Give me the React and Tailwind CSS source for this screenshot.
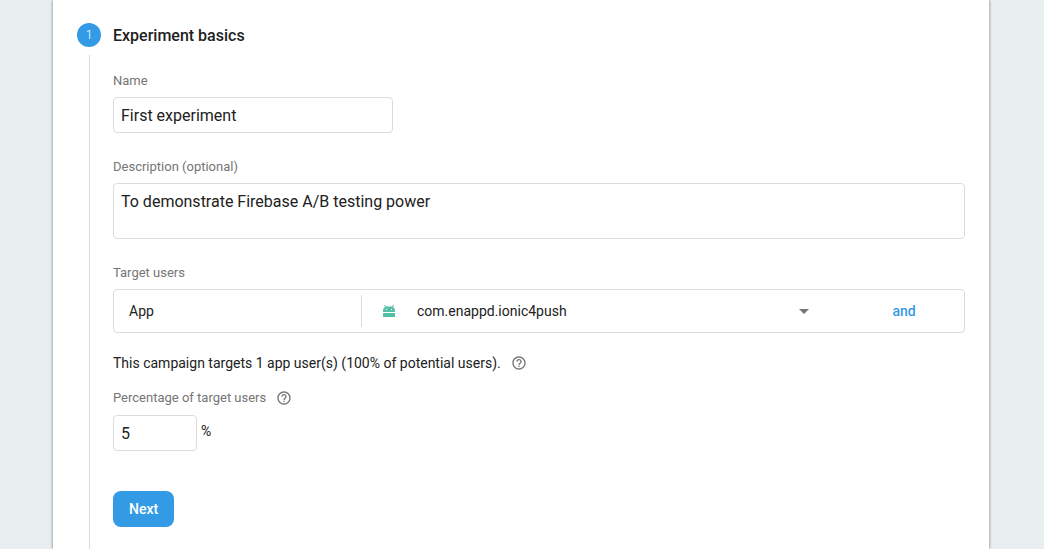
import React, { useState } from 'react'
import { MdHelpOutline, MdArrowDropDown } from 'react-icons/md'

const APPS = ['com.enappd.ionic4push']

const LABEL = 'flex items-center gap-2.5 text-[13px] leading-[18px] text-[#757575]'
const FIELD = 'block border border-[#dcdcdc] rounded bg-white px-[7px] text-base text-[#212121] outline-none focus:border-[#339be6]'
const GROUP = 'mt-[25px] flex flex-col gap-[7px]'

// Android head shown next to the selected app
function AndroidIcon() {
  return (
    <svg viewBox="0 0 12 12" className="w-3 h-3 shrink-0 overflow-visible" aria-hidden="true">
      <path d="M0 8h12v3.400a.6.6 0 0 1-.6.6H.6a.6.6 0 0 1-.6-.6z" fill="#54bfa5" />
      <path d="M0 7V5.500C0 3.800.9 2.500 2.300 1.900L1 .5l.6-.6 1.800 1.700h5.200L10.400-.1l.6.6-1.300 1.400C11.100 2.500 12 3.800 12 5.500V7z" fill="#54bfa5" />
      <circle cx="3.500" cy="4.400" r=".6" fill="#fff" />
      <circle cx="8.500" cy="4.400" r=".6" fill="#fff" />
    </svg>
  )
}

function HelpButton({ label }) {
  return (
    <button type="button" aria-label={label} className="text-[#757575]">
      <MdHelpOutline className="w-4 h-4" />
    </button>
  )
}

export default function App() {
  const [name, setName] = useState('First experiment')
  const [description, setDescription] = useState('To demonstrate Firebase A/B testing power')
  const [app, setApp] = useState(APPS[0])
  const [percent, setPercent] = useState('5')

  return (
    <div className="min-h-screen flex bg-[#e9eef1] pl-[53px] pr-[55px] font-[Roboto,sans-serif] text-[#212121]">
      <form className="flex-1 min-w-0 flex gap-3 bg-white px-6 pt-[23px] shadow-[0_0_3px_rgba(0,0,0,0.5)]">
        <div className="w-6 shrink-0 flex flex-col items-center gap-2">
          <div className="w-6 h-6 rounded-full bg-[#339be6] text-white text-[13px] font-light flex items-center justify-center">1</div>
          <div className="w-px flex-1 bg-[#dcdcdc]" />
        </div>

        <div className="flex-1 min-w-0 pb-[22px]">
          <h2 className="text-base leading-[26px] font-medium">Experiment basics</h2>

          <div className="mt-[23px] flex flex-col gap-[7px]">
            <label htmlFor="name" className={LABEL}>Name</label>
            <input id="name" value={name} onChange={e => setName(e.target.value)} className={`${FIELD} w-[280px] h-9`} />
          </div>

          <div className={GROUP}>
            <label htmlFor="description" className={LABEL}>Description (optional)</label>
            <textarea
              id="description"
              value={description}
              onChange={e => setDescription(e.target.value)}
              className={`${FIELD} w-full h-14 py-[6px] resize-none`}
            />
          </div>

          <div className={GROUP}>
            <label htmlFor="app" className={LABEL}>Target users</label>
            <div className="h-11 flex items-center border border-[#dcdcdc] rounded text-sm">
              <div className="w-[247px] px-[15px]">App</div>
              <div className="w-px h-8 bg-[#dcdcdc]" />
              <div className="flex-1 min-w-0 relative flex items-center pl-[21px]">
                <AndroidIcon />
                <select
                  id="app"
                  value={app}
                  onChange={e => setApp(e.target.value)}
                  className="flex-1 min-w-0 h-8 pl-[22px] appearance-none bg-transparent outline-none"
                >
                  {APPS.map(a => <option key={a} value={a}>{a}</option>)}
                </select>
                <MdArrowDropDown className="absolute right-0 w-6 h-6 text-[#757575] pointer-events-none" />
              </div>
              <div className="w-[148px] flex justify-center pl-7">
                <button type="button" className="font-medium text-[#339be6]">and</button>
              </div>
            </div>
          </div>

          <div className="mt-5 flex items-center gap-2.5 text-sm leading-5">
            <p>This campaign targets 1 app user(s) (100% of potential users).</p>
            <HelpButton label="About targeted users" />
          </div>

          <div className="mt-4 flex flex-col gap-2">
            <div className={LABEL}>
              <label htmlFor="percent">Percentage of target users</label>
              <HelpButton label="About percentage" />
            </div>
            <div className="flex items-start gap-1">
              <input id="percent" value={percent} onChange={e => setPercent(e.target.value)} className={`${FIELD} w-[84px] h-9`} />
              <span className="text-sm leading-8">%</span>
            </div>
          </div>

          <button type="button" className="mt-10 h-9 px-4 rounded-lg bg-[#339be6] text-sm font-medium text-white">Next</button>
        </div>
      </form>
    </div>
  )
}
